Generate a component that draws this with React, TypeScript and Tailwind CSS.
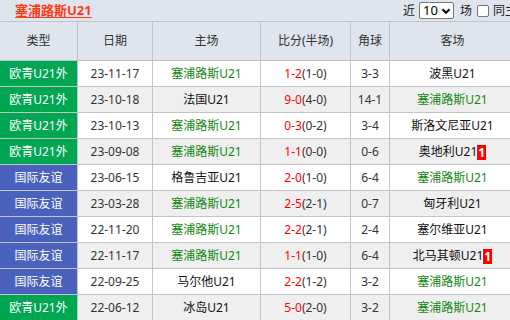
import React from "react";

type Match = {
  type: "euro" | "friendly";
  date: string;
  home: string;
  score: string;
  half: string;
  corner: string;
  away: string;
  badge?: "home" | "away";
};

const TEAM = "塞浦路斯U21";

const matches: Match[] = [
  { type: "euro", date: "23-11-17", home: TEAM, score: "1-2", half: "(1-0)", corner: "3-3", away: "波黑U21" },
  { type: "euro", date: "23-10-18", home: "法国U21", score: "9-0", half: "(4-0)", corner: "14-1", away: TEAM },
  { type: "euro", date: "23-10-13", home: TEAM, score: "0-3", half: "(0-2)", corner: "3-4", away: "斯洛文尼亚U21" },
  { type: "euro", date: "23-09-08", home: TEAM, score: "1-1", half: "(0-0)", corner: "0-6", away: "奥地利U21", badge: "away" },
  { type: "friendly", date: "23-06-15", home: "格鲁吉亚U21", score: "2-0", half: "(1-0)", corner: "6-4", away: TEAM },
  { type: "friendly", date: "23-03-28", home: TEAM, score: "2-5", half: "(2-1)", corner: "0-7", away: "匈牙利U21" },
  { type: "friendly", date: "22-11-20", home: TEAM, score: "2-2", half: "(2-1)", corner: "2-4", away: "塞尔维亚U21" },
  { type: "friendly", date: "22-11-17", home: TEAM, score: "1-1", half: "(1-0)", corner: "6-4", away: "北马其顿U21", badge: "away" },
  { type: "friendly", date: "22-09-25", home: "马尔他U21", score: "2-2", half: "(1-2)", corner: "3-2", away: TEAM },
  { type: "euro", date: "22-06-12", home: "冰岛U21", score: "5-0", half: "(2-0)", corner: "3-2", away: TEAM },
];

const Team = ({ name, badge }: { name: string; badge?: boolean }) => (
  <span className={name === TEAM ? "text-[#118811]" : "text-[#111]"}>
    {name}
    {badge && (
      <span className="inline-block bg-[#ff0000] text-white font-bold px-[1px] leading-[15px] align-middle">1</span>
    )}
  </span>
);

const cell = "flex items-center justify-center border-r border-[#c4c4c4]";

export default function App() {
  return (
    <div
      className="w-[510px] h-[320px] overflow-hidden bg-white text-[12px] text-[#333]"
      style={{ fontFamily: '"Noto Sans", "Noto Sans CJK SC", sans-serif' }}
    >
      <div className="w-[516px]">
        <div className="h-[22px] bg-[#dfe5ee] flex items-center justify-between border-b border-[#c4c4c4]">
          <a className="ml-[15px] text-[13px] font-bold text-[#ff3a12] underline underline-offset-2 leading-none">
            {TEAM}
          </a>
          <div className="flex items-center text-[#222] whitespace-nowrap w-[113px] overflow-hidden">
            <span>近</span>
            <div className="ml-[4px] w-[35px] h-[17px] shrink-0 border border-[#767676] bg-white rounded-[2px] flex items-center justify-between pl-[3px] pr-[2px] text-[13px] text-black">
              <span className="leading-none">10</span>
              <svg viewBox="0 0 10 10" className="w-[10px] h-[10px]">
                <path d="M1.5 3.2 L5 6.8 L8.5 3.2" fill="none" stroke="#000" strokeWidth="2" />
              </svg>
            </div>
            <span className="ml-[6px]">场</span>
            <span className="ml-[5px] w-[12px] h-[12px] shrink-0 border border-[#767676] rounded-[2px] bg-white" />
            <span className="ml-[4px]">同主客</span>
          </div>
        </div>
        <div className="grid grid-cols-[78px_75px_108px_90px_39px_1fr]">
          {["类型", "日期", "主场", "比分(半场)", "角球", "客场"].map((h) => (
            <div key={h} className={`${cell} h-[39px] bg-[#dfe5ee] border-b text-[#333]`}>
              {h}
            </div>
          ))}
          {matches.map((m, i) => {
            const bg = i % 2 === 0 ? "bg-white" : "bg-[#efefef]";
            return (
              <React.Fragment key={i}>
                <div
                  className={`${cell} h-[26px] border-b text-white ${
                    m.type === "euro" ? "bg-[#00a651]" : "bg-[#4a62bd]"
                  }`}
                >
                  {m.type === "euro" ? "欧青U21外" : "国际友谊"}
                </div>
                <div className={`${cell} ${bg} h-[26px] border-b`}>{m.date}</div>
                <div className={`${cell} ${bg} h-[26px] border-b`}>
                  <Team name={m.home} badge={m.badge === "home"} />
                </div>
                <div className={`${cell} ${bg} h-[26px] border-b`}>
                  <span className="text-[#ff0000]">{m.score}</span>
                  <span>{m.half}</span>
                </div>
                <div className={`${cell} ${bg} h-[26px] border-b`}>{m.corner}</div>
                <div className={`${cell} ${bg} h-[26px] border-b`}>
                  <Team name={m.away} badge={m.badge === "away"} />
                </div>
              </React.Fragment>
            );
          })}
        </div>
      </div>
    </div>
  );
}
